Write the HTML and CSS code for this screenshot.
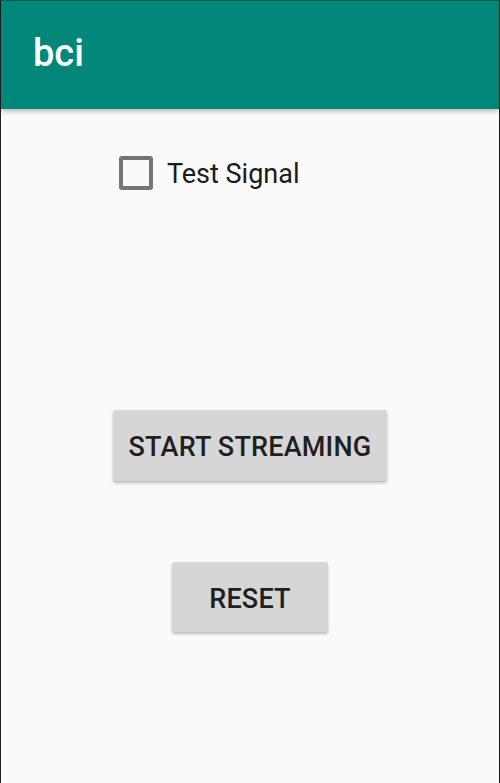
FILE: index.html
```html
<!DOCTYPE html>
<html>
<head>
<meta charset="utf-8">
<link rel="stylesheet" href="styles.css">
</head>
<body>
<div class="screen">
  <header class="appbar"><span class="title">bci</span></header>
  <main class="content">
    <label class="check-row">
      <span class="checkbox"></span>
      <span class="check-label">Test Signal</span>
    </label>
    <button class="btn btn-start">START STREAMING</button>
    <button class="btn btn-reset">RESET</button>
  </main>
</div>
</body>
</html>
```
FILE: styles.css
```css
html, body {
  margin: 0;
  padding: 0;
  width: 500px;
  height: 783px;
  overflow: hidden;
}
body {
  font-family: Roboto, "Liberation Sans", sans-serif;
  background: #fafafa;
}
.screen {
  box-sizing: border-box;
  width: 500px;
  height: 783px;
  border-left: 1px solid #1e1e1e;
  border-right: 1px solid #1e1e1e;
  border-top: 1px solid #005f54;
  background: #fafafa;
  display: flex;
  flex-direction: column;
}
.appbar {
  height: 108px;
  background: #00877a;
  box-shadow: 0 2px 5px rgba(0,0,0,0.28);
  display: flex;
  align-items: center;
  padding-left: 32px;
  position: relative;
  z-index: 1;
}
.title {
  color: #fff;
  font-size: 38px;
  font-weight: 500;
  margin-top: -4px;
}
.content {
  flex: 1;
  display: flex;
  flex-direction: column;
  align-items: center;
}
.check-row {
  align-self: flex-start;
  margin-left: 118px;
  margin-top: 46px;
  display: flex;
  align-items: center;
  gap: 14px;
}
.checkbox {
  box-sizing: border-box;
  width: 34px;
  height: 34px;
  border: 4px solid #757575;
  border-radius: 3px;
}
.check-label {
  font-size: 27px;
  color: #1a1a1a;
  padding-top: 3px;
}
.btn {
  font-family: Roboto, "Liberation Sans", sans-serif;
  font-weight: 500;
  font-size: 27px;
  letter-spacing: 0.2px;
  color: #1f1f1f;
  background: #d6d6d6;
  border: none;
  border-radius: 3px;
  box-shadow: 0 2px 3px rgba(0,0,0,0.25);
  height: 71px;
  padding: 3px 0 0;
}
.btn-start {
  width: 274px;
  margin-top: 220px;
}
.btn-reset {
  width: 156px;
  height: 70px;
  margin-top: 81px;
}
```
